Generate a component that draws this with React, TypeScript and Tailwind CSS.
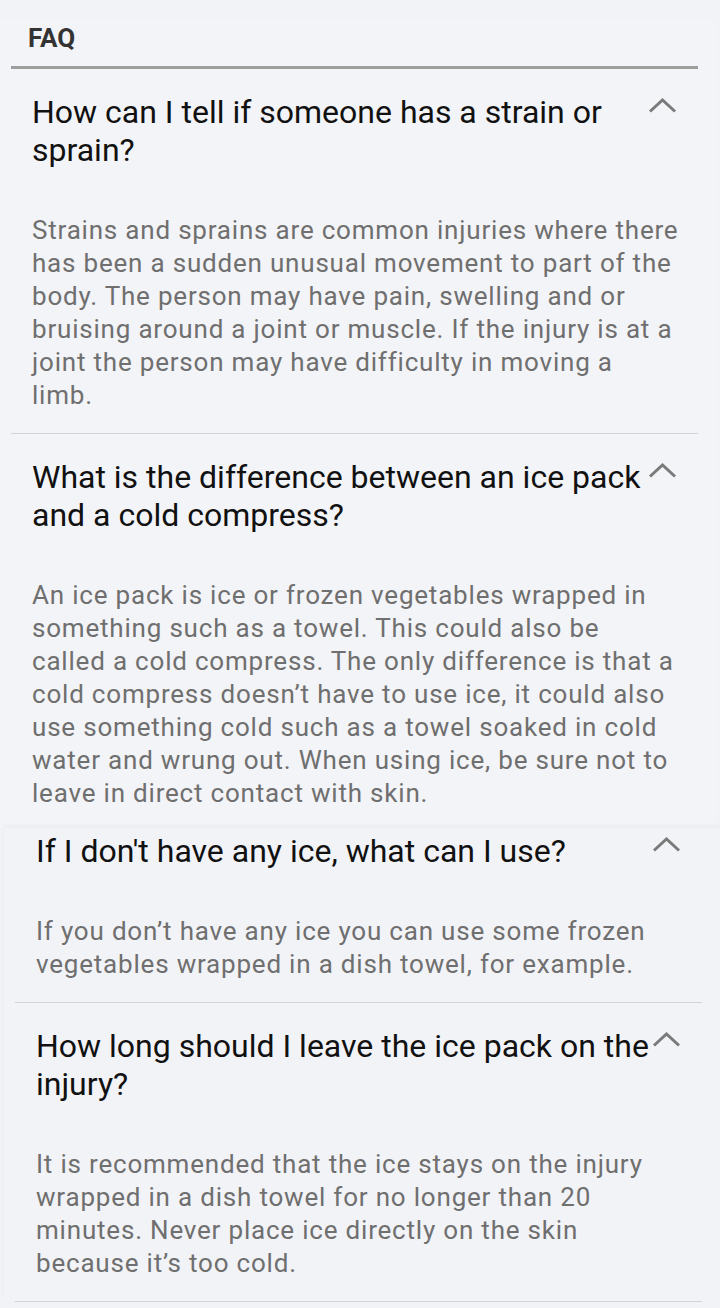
const font = { fontFamily: "Roboto, 'Noto Sans', sans-serif" };

type Item = { q: string; a: string[] };

const top: Item[] = [
  {
    q: "How can I tell if someone has a strain or sprain?",
    a: [
      "Strains and sprains are common injuries where there",
      "has been a sudden unusual movement to part of the",
      "body. The person may have pain, swelling and or",
      "bruising around a joint or muscle. If the injury is at a",
      "joint the person may have difficulty in moving a",
      "limb.",
    ],
  },
  {
    q: "What is the difference between an ice pack and a cold compress?",
    a: [
      "An ice pack is ice or frozen vegetables wrapped in",
      "something such as a towel. This could also be",
      "called a cold compress. The only difference is that a",
      "cold compress doesn\u2019t have to use ice, it could also",
      "use something cold such as a towel soaked in cold",
      "water and wrung out. When using ice, be sure not to",
      "leave in direct contact with skin.",
    ],
  },
];

const bottom: Item[] = [
  {
    q: "If I don't have any ice, what can I use?",
    a: [
      "If you don\u2019t have any ice you can use some frozen",
      "vegetables wrapped in a dish towel, for example.",
    ],
  },
  {
    q: "How long should I leave the ice pack on the injury?",
    a: [
      "It is recommended that the ice stays on the injury",
      "wrapped in a dish towel for no longer than 20",
      "minutes. Never place ice directly on the skin",
      "because it\u2019s too cold.",
    ],
  },
];

function Chevron() {
  return (
    <svg width="29" height="15" viewBox="0 0 29 15" className="mt-[5px] flex-none">
      <polyline points="2,13.5 14.5,2 27,13.5" fill="none" stroke="#7a7a7a" strokeWidth="3" />
    </svg>
  );
}

function Row({ item, first, divider }: { item: Item; first?: boolean; divider: boolean }) {
  return (
    <div className={`mx-[11px] w-[687px] ${divider ? "border-b border-[#d3d3d7]" : ""}`}>
      <div className={`flex items-start pl-[21px] pr-[21px] ${first ? "pt-[4px]" : "pt-[24px]"}`}>
        <p className="min-w-0 flex-1 text-[32px] leading-[38px] text-[#111]">{item.q}</p>
        <Chevron />
      </div>
      <p
        className={`mt-[45px] whitespace-nowrap pl-[21px] text-[26px] leading-[33px] tracking-[0.8px] text-[#6f6f6f] ${
          divider ? "pb-[21px]" : "pb-[18px]"
        }`}
      >
        {item.a.map((line, i) => (
          <span key={i} className="block">
            {line}
          </span>
        ))}
      </p>
    </div>
  );
}

export default function App() {
  return (
    <div className="min-h-[1308px] w-[720px] overflow-hidden bg-[#f2f3f7]" style={font}>
      <div className="w-[716px] bg-[#f3f4f7]">
        <div className="mt-[20px] h-[36px] px-[28px] text-[26px] font-bold leading-[36px] text-[#333]">FAQ</div>
        <div className="mx-[11px] mt-[10px] h-[3px] w-[687px] bg-[#9e9e9e]" />
        <Row item={top[0]} divider />
        <Row item={top[1]} divider={false} />
      </div>
      <div className="ml-[4px] bg-[#f2f3f7] shadow-[0_-2px_4px_rgba(0,0,0,0.04)]">
        <Row item={bottom[0]} first divider />
        <Row item={bottom[1]} divider />
      </div>
    </div>
  );
}
